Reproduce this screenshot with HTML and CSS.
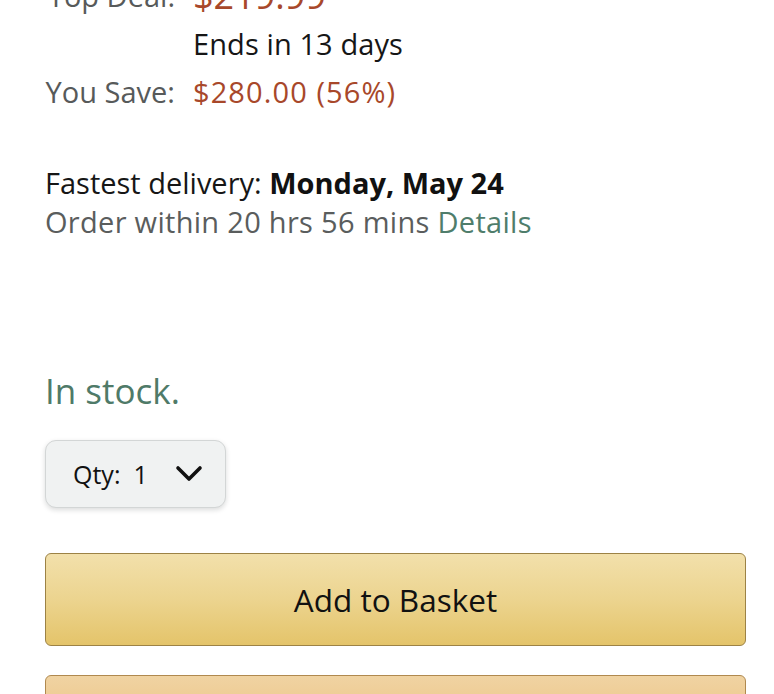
FILE: index.html
```html
<!DOCTYPE html>
<html lang="en">
<head>
<meta charset="utf-8">
<title>Buy box</title>
<link rel="stylesheet" href="styles.css">
</head>
<body>
<main class="buybox">
  <div class="deal">
    <span class="label">Top Deal:</span>
    <span class="price">$219.99</span>
    <span class="label"></span>
    <span class="value">Ends in 13 days</span>
    <span class="label">You Save:</span>
    <span class="save">$280.00 (56%)</span>
  </div>
  <div class="delivery">
    <div class="line">Fastest delivery: <strong>Monday, May 24</strong></div>
    <div class="line muted">Order within 20 hrs 56 mins <a class="link" href="#">Details</a></div>
  </div>
  <div class="stock">In stock.</div>
  <button class="qty" type="button">
    <span>Qty:&nbsp; 1</span>
    <svg class="chev" width="28" height="18" viewBox="0 0 28 18" aria-hidden="true"><polyline points="3,3 14,14 25,3" fill="none" stroke="#111" stroke-width="3.6" stroke-linecap="round" stroke-linejoin="round"/></svg>
  </button>
  <button class="btn btn-cart" type="button">Add to Basket</button>
  <button class="btn btn-buy" type="button">Buy Now</button>
</main>
</body>
</html>
```
FILE: styles.css
```css
html, body {
  margin: 0;
  padding: 0;
  background: #ffffff;
  overflow: hidden;
}
body {
  font-family: "Open Sans", "Noto Sans", "Liberation Sans", sans-serif;
  color: #161616;
}
.buybox {
  display: flex;
  flex-direction: column;
  align-items: flex-start;
  padding: 0 28px 0 45px;
  margin-top: -28px;
}
.deal {
  display: grid;
  grid-template-columns: 130px auto;
  column-gap: 18px;
  font-size: 29px;
  line-height: 48px;
}
.label {
  color: #575a5a;
  justify-self: end;
}
.price {
  color: #a8482a;
  font-size: 36px;
}
.value {
  letter-spacing: 0.1px;
}
.save {
  color: #a8482a;
  letter-spacing: 1.1px;
}
.delivery {
  margin-top: 47px;
  font-size: 29px;
  line-height: 39px;
}
.delivery strong {
  font-weight: 700;
  color: #111;
}
.muted {
  color: #5a5d5d;
  letter-spacing: 0.3px;
}
.link {
  color: #4f7d6b;
  text-decoration: none;
}
.stock {
  margin-top: 129px;
  font-size: 35px;
  line-height: 42px;
  color: #4f7a68;
}
.qty {
  margin-top: 28px;
  width: 181px;
  height: 68px;
  box-sizing: border-box;
  display: flex;
  align-items: center;
  justify-content: space-between;
  padding: 0 22px 0 27px;
  border: 1px solid #d3d6d6;
  border-radius: 11px;
  background: #f0f2f2;
  box-shadow: 0 2px 5px rgba(15, 17, 17, 0.15);
  font-family: inherit;
  font-size: 25px;
  color: #111;
}
.chev {
  display: block;
}
.btn {
  width: 100%;
  box-sizing: border-box;
  height: 93px;
  border-radius: 6px;
  font-family: inherit;
  font-size: 31.5px;
  color: #111;
}
.btn-cart {
  margin-top: 45px;
  border: 1.5px solid #9c8245;
  background: linear-gradient(to bottom, #f2e0ab 0%, #ecd48f 50%, #e4c46a 100%);
}
.btn-buy {
  margin-top: 29px;
  border: 1.5px solid #b0894f;
  background: linear-gradient(to bottom, #f0d3a2 0%, #eab96f 100%);
}
```
